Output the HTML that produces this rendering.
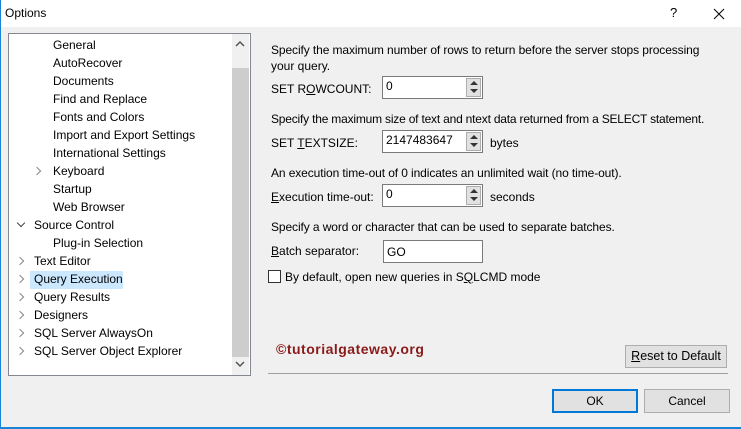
<!DOCTYPE html>
<html><head><style>
*{margin:0;padding:0;box-sizing:border-box}
body{width:741px;height:429px;overflow:hidden;font-family:"Liberation Sans",sans-serif;font-size:12px;color:#000;background:#f0f0f0;position:relative}
.abs{position:absolute;white-space:nowrap}
.r{letter-spacing:-0.1px}
#title{left:0;top:0;width:741px;height:27px;background:#fff;border-left:1px solid #1883d7}
#lb{left:0;top:0;width:1px;height:429px;background:#1883d7}
#bb{left:0;top:427px;width:741px;height:2px;background:#1883d7}
#tree{left:8px;top:33px;width:243px;height:343px;background:#fff;border:1px solid #828790}
.sb{left:232px;top:34px;width:17px;height:341px;background:#f0f0f0}
.th{left:232px;top:68px;width:17px;height:289px;background:#cdcdcd}
.ti{position:absolute;line-height:18px;white-space:nowrap;margin-top:1px}
.chev{position:absolute;width:6px;height:6px;border-right:1.3px solid #888;border-bottom:1.3px solid #888}
.in{position:absolute;background:#fff;border:1px solid #7a7a7a;height:23px;padding:2px 3px;font-size:12px}
.spin{position:absolute;right:1px;top:1px;width:15px;height:19px;background:#e1e1e1;border:1px solid #adadad}
.spin:before{content:"";position:absolute;left:3px;top:2px;border-left:4px solid transparent;border-right:4px solid transparent;border-bottom:4px solid #333}
.spin:after{content:"";position:absolute;left:3px;top:10px;border-left:4px solid transparent;border-right:4px solid transparent;border-top:4px solid #333}
.btn{position:absolute;background:#e1e1e1;border:1px solid #adadad;text-align:center;font-size:12px}
u{text-decoration:underline}
</style></head><body>
<div id="title" class="abs"></div>
<div class="abs" style="left:5px;top:6px;font-size:12px">Options</div>
<div class="abs" style="left:670px;top:5px;font-size:13px">?</div>
<svg class="abs" style="left:713px;top:8px" width="12" height="12"><path d="M1 1L11 11M11 1L1 11" stroke="#000" stroke-width="1"/></svg>
<div id="lb" class="abs"></div>
<div id="tree" class="abs"></div>
<div class="abs sb"></div><div class="abs th"></div>
<svg class="abs" style="left:235px;top:40px" width="10" height="8"><path d="M1 6L5 2L9 6" stroke="#555" stroke-width="1.5" fill="none"/></svg>
<svg class="abs" style="left:235px;top:360px" width="10" height="8"><path d="M1 2L5 6L9 2" stroke="#555" stroke-width="1.5" fill="none"/></svg>
<div class="ti" style="left:53px;top:35px">General</div>
<div class="ti" style="left:53px;top:53px">AutoRecover</div>
<div class="ti" style="left:53px;top:71px">Documents</div>
<div class="ti" style="left:53px;top:89px">Find and Replace</div>
<div class="ti" style="left:53px;top:107px">Fonts and Colors</div>
<div class="ti" style="left:53px;top:125px">Import and Export Settings</div>
<div class="ti" style="left:53px;top:143px">International Settings</div>
<div class="chev" style="left:34px;top:168px;transform:rotate(-45deg)"></div>
<div class="ti" style="left:53px;top:161px">Keyboard</div>
<div class="ti" style="left:53px;top:179px">Startup</div>
<div class="ti" style="left:53px;top:197px">Web Browser</div>
<div class="chev" style="left:18px;top:220px;transform:rotate(45deg);border-color:#444"></div>
<div class="ti" style="left:34px;top:215px">Source Control</div>
<div class="ti" style="left:53px;top:233px">Plug-in Selection</div>
<div class="abs" style="left:30px;top:271px;width:93px;height:18px;background:#cce8ff"></div>
<div class="chev" style="left:17px;top:258px;transform:rotate(-45deg)"></div>
<div class="ti" style="left:34px;top:251px">Text Editor</div>
<div class="chev" style="left:17px;top:276px;transform:rotate(-45deg)"></div>
<div class="ti" style="left:34px;top:269px">Query Execution</div>
<div class="chev" style="left:17px;top:294px;transform:rotate(-45deg)"></div>
<div class="ti" style="left:34px;top:287px">Query Results</div>
<div class="chev" style="left:17px;top:312px;transform:rotate(-45deg)"></div>
<div class="ti" style="left:34px;top:305px">Designers</div>
<div class="chev" style="left:17px;top:330px;transform:rotate(-45deg)"></div>
<div class="ti" style="left:34px;top:323px">SQL Server AlwaysOn</div>
<div class="chev" style="left:17px;top:348px;transform:rotate(-45deg)"></div>
<div class="ti" style="left:34px;top:341px">SQL Server Object Explorer</div>

<div class="abs r" style="left:271px;top:43px">Specify the maximum number of rows to return before the server stops processing</div>
<div class="abs" style="left:271px;top:59px">your query.</div>
<div class="abs" style="left:271px;top:82px">SET R<u>O</u>WCOUNT:</div>
<div class="in" style="left:382px;top:76px;width:101px">0<div class="spin"></div></div>
<div class="abs" style="left:271px;top:112px;letter-spacing:-0.2px">Specify the maximum size of text and ntext data returned from a SELECT statement.</div>
<div class="abs" style="left:271px;top:136px">SET <u>T</u>EXTSIZE:</div>
<div class="in" style="left:382px;top:130px;width:101px">2147483647<div class="spin"></div></div>
<div class="abs" style="left:490px;top:136px">bytes</div>
<div class="abs r" style="left:271px;top:166px">An execution time-out of 0 indicates an unlimited wait (no time-out).</div>
<div class="abs" style="left:271px;top:190px"><u>E</u>xecution time-out:</div>
<div class="in" style="left:382px;top:184px;width:101px">0<div class="spin"></div></div>
<div class="abs" style="left:490px;top:190px">seconds</div>
<div class="abs r" style="left:271px;top:220px">Specify a word or character that can be used to separate batches.</div>
<div class="abs" style="left:271px;top:244px"><u>B</u>atch separator:</div>
<div class="in" style="left:383px;top:240px;width:100px;padding-top:4px">GO</div>
<div class="abs" style="left:268px;top:270px;width:13px;height:13px;background:#fff;border:1px solid #333"></div>
<div class="abs" style="left:285px;top:270px">By default, open new queries in S<u>Q</u>LCMD mode</div>
<div class="abs" style="left:276px;top:341px;font-weight:bold;font-size:14px;letter-spacing:0.5px;color:#8b1a1a">©tutorialgateway.org</div>
<div class="btn" style="left:625px;top:345px;width:102px;height:23px;line-height:21px;font-size:12.5px"><u>R</u>eset to Default</div>
<div class="abs" style="left:268px;top:373px;width:460px;height:1px;background:#a0a0a0"></div>
<div class="btn" style="left:552px;top:389px;width:86px;height:24px;line-height:20px;border:2px solid #0078d7">OK</div>
<div class="btn" style="left:644px;top:389px;width:86px;height:24px;line-height:22px">Cancel</div>
<div id="bb" class="abs"></div>
</body></html>
